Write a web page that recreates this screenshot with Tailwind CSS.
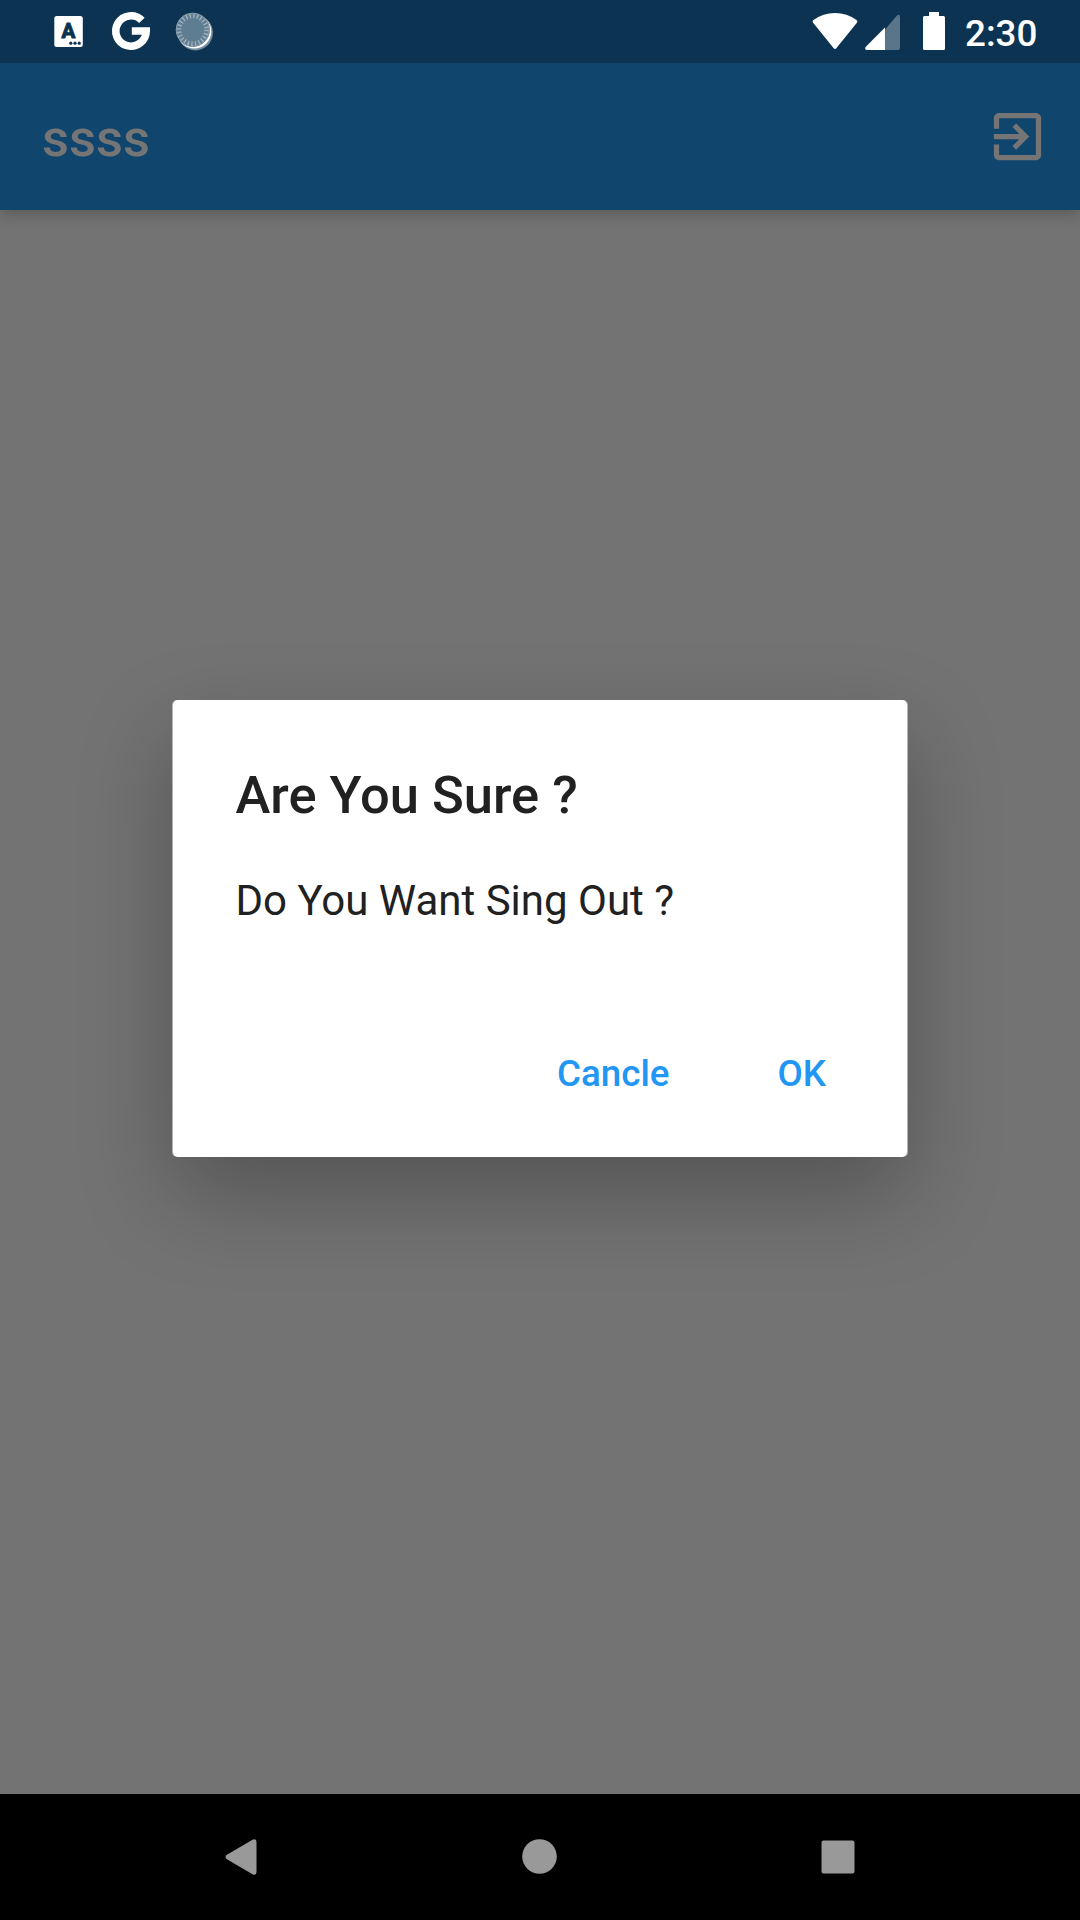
<!DOCTYPE html>
<html lang="en">
<head>
<meta charset="utf-8">
<title>Sign out</title>
<script src="https://cdn.jsdelivr.net/npm/@tailwindcss/browser@4"></script>
</head>
<body class="w-[1080px] h-[1920px] overflow-hidden bg-[#737373] font-['Roboto',sans-serif]">
<div class="relative flex flex-col w-full h-full">
  <header class="shrink-0 relative shadow-[0_5px_14px_rgba(0,0,0,0.2)]">
    <div class="h-[63px] bg-[#0c3351] flex justify-between">
      <svg class="w-[240px] h-[63px]" viewBox="0 0 240 63">
        <rect x="54.3" y="16" width="28.5" height="31" rx="2.5" fill="#fff"/>
        <text x="68.4" y="38.3" text-anchor="middle" font-family="Roboto" font-weight="700" font-size="20.5" fill="#0c3351" stroke="#0c3351" stroke-width="1" stroke-linejoin="round">A</text>
        <g fill="#0c3351"><circle cx="70.800" cy="43.200" r="1.600"/><circle cx="75" cy="43.200" r="1.600"/><circle cx="79.200" cy="43.200" r="1.600"/></g>
        <path d="M141.900 20.400A15.200 15.200 0 1 0 146.200 31H131.800" fill="none" stroke="#fff" stroke-width="7.600"/>
        <circle cx="195.300" cy="32.800" r="17.600" fill="#fff" opacity=".45"/>
        <circle cx="194.300" cy="31.600" r="17" fill="#fff"/>
        <circle cx="192.800" cy="29.800" r="17" fill="#5f7d92"/>
        <circle cx="192.800" cy="29.800" r="14" fill="none" stroke="#a1b1bd" stroke-width="5" stroke-dasharray="1.400 2.265"/>
        <circle cx="192.800" cy="29.800" r="16.500" fill="none" stroke="#8398a8" stroke-width="1"/>
      </svg>
      <svg class="w-[280px] h-[63px]" viewBox="800 0 280 63">
        <path d="M812.900 22.400Q812 21 813.500 20Q823 13 835 13Q847 13 856.500 20Q858 21 857.100 22.400L836.500 48Q835 50 833.500 48Z" fill="#fff"/>
        <path d="M885 29.500L897 15.600Q900 13.500 900 17V48Q900 50 898 50H885Z" fill="#5a758a"/>
        <path d="M885 27.500V50H867Q864 49.500 865.800 46.700Z" fill="#fff"/>
        <path d="M929 12H939V16H943.500Q945 16 945 17.500V48.500Q945 50 943.500 50H924.500Q923 50 923 48.500V17.500Q923 16 924.500 16H929Z" fill="#fff"/>
        <text x="965" y="46" font-family="Roboto" font-weight="500" font-size="36.75" fill="#fff">2:30</text>
      </svg>
    </div>
    <div class="h-[147px] bg-[#10456e] flex items-center justify-between pl-[42px] pr-[31px] text-[#757575]">
      <h1 class="text-[52.5px] leading-[62px] font-medium pt-0.5">ssss</h1>
      <svg class="size-[63px]" viewBox="0 0 24 24" fill="currentColor"><path d="M10.09 15.590L11.500 17l5-5-5-5-1.410 1.410L12.670 11H3v2h9.670l-2.580 2.590zM19 3H5c-1.110 0-2 .9-2 2v4h2V5h14v14H5v-4H3v4c0 1.100.89 2 2 2h14c1.100 0 2-.9 2-2V5c0-1.100-.9-2-2-2z"/></svg>
    </div>
  </header>
  <main class="flex-1 flex justify-center pt-[490px]">
    <section class="w-[736px] h-[457px] bg-white bg-clip-padding border-x border-white/50 rounded-[5px] shadow-[0_38px_92px_rgba(0,0,0,0.27)] text-[#212121] pt-16 pl-[62.500px] pr-[63px]">
      <h2 class="text-[52.500px] leading-[62px] font-medium">Are You Sure ?</h2>
      <p class="mt-[50px] text-[42px] leading-[50px]">Do You Want Sing Out ?</p>
      <div class="mt-[126px] flex justify-end pr-[18px] gap-[108px] text-[36.750px] leading-[44px] font-medium text-[#2196f3]">
        <button>Cancle</button><button>OK</button>
      </div>
    </section>
  </main>
  <nav class="h-[126px] bg-black shrink-0">
    <svg class="w-[1080px] h-[126px]" viewBox="0 1794 1080 126" fill="#999">
      <path d="M252.500 1839.800Q256.500 1838 256.500 1842V1872Q256.500 1876 252.500 1874.200L226.500 1859Q224.500 1857 226.500 1855Z"/>
      <circle cx="539.500" cy="1856.500" r="17.300"/>
      <rect x="821.500" y="1840.500" width="33" height="33" rx="2"/>
    </svg>
  </nav>
</div>
</body>
</html>
